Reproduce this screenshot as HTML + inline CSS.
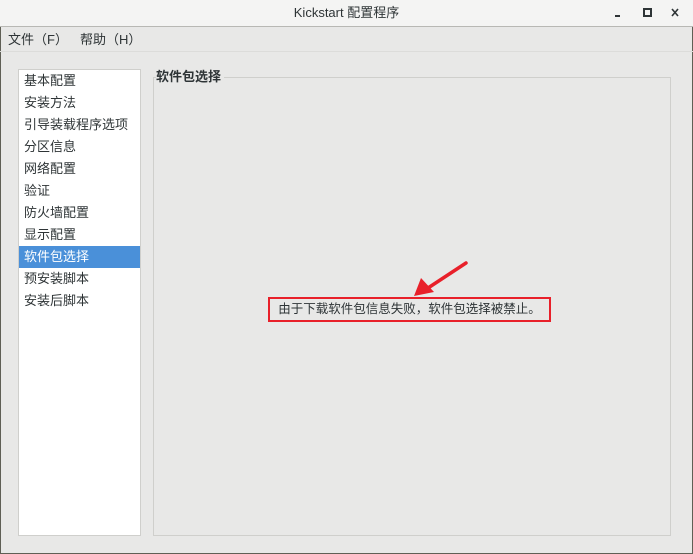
<!DOCTYPE html><html><head><meta charset="utf-8"><style>
*{margin:0;padding:0;box-sizing:border-box}
body{width:693px;height:554px;background:#e8e8e7;font-family:"Liberation Sans","Noto Sans CJK SC",sans-serif;font-size:13px;color:#2e3436;position:relative;overflow:hidden}
.win{position:absolute;left:0;top:0;width:693px;height:554px;border:1px solid #5f5f55;border-top:none}
.title{position:absolute;left:0;top:0;width:693px;height:27px;background:#f4f4f3;border-bottom:1px solid #b8b8b4;text-align:center;line-height:26px;font-size:13px;color:#2e3436}
.menu{position:absolute;top:27px;left:0;width:693px;height:25px;border-bottom:1px solid #dcdcda;line-height:25px}
.side{position:absolute;left:18px;top:69px;width:123px;height:467px;background:#fff;border:1px solid #cfcfcc}
.side div{height:22px;line-height:22px;padding-left:5px}
.side .sel{background:#4a90d9;color:#fff}
.panel{position:absolute;left:153px;top:77px;width:518px;height:459px;border:1px solid #cfcfcc}
.legend{position:absolute;left:156px;top:68px;background:#e8e8e7;padding-right:3px;font-weight:bold;line-height:18px}
.msg{position:absolute;left:268px;top:297px;width:283px;height:25px;border:2px solid #e8202a;text-align:center;line-height:21px;font-size:12.5px}
</style></head><body>
<div class="win"></div>
<div class="title">Kickstart 配置程序</div>
<svg style="position:absolute;left:0;top:0" width="693" height="27"><rect x="615" y="15" width="5" height="2" fill="#2e3436"/><rect x="644" y="9" width="7" height="7" fill="none" stroke="#2e3436" stroke-width="2"/><path d="M672 9 L678 16 M678 9 L672 16" stroke="#2e3436" stroke-width="1.6"/></svg>
<div class="menu"><span style="position:absolute;left:8px">文件（F）</span><span style="position:absolute;left:80px">帮助（H）</span></div>
<div class="side">
<div>基本配置</div><div>安装方法</div><div>引导装载程序选项</div><div>分区信息</div><div>网络配置</div><div>验证</div><div>防火墙配置</div><div>显示配置</div><div class="sel">软件包选择</div><div>预安装脚本</div><div>安装后脚本</div>
</div>
<div class="panel"></div>
<div class="legend">软件包选择</div>
<div class="msg">由于下载软件包信息失败，软件包选择被禁止。</div>
<svg style="position:absolute;left:0;top:0" width="693" height="554"><path d="M466 263 L428 288" stroke="#e8202a" stroke-width="3.5" stroke-linecap="round"/><polygon points="414,296 421,278 434,292" fill="#e8202a"/></svg>
</body></html>
